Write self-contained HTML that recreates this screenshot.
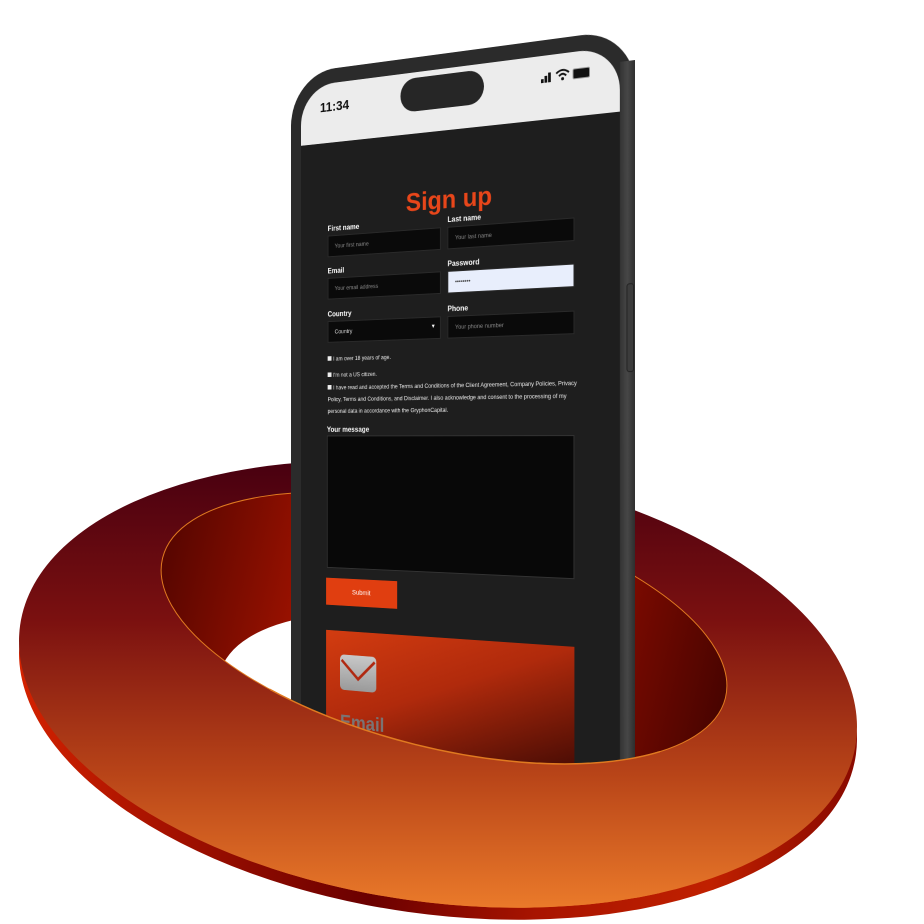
<!DOCTYPE html>
<html><head><meta charset="utf-8"><style>
html,body{margin:0;padding:0;background:#fff;width:924px;height:924px;overflow:hidden;position:relative;font-family:"Liberation Sans",sans-serif}
svg{position:absolute;left:0;top:0}
#ph{position:absolute;left:228px;top:0;width:407px;height:820px;transform-origin:407px 440px;transform:perspective(1000px) rotateY(-18deg)}
.frame{position:absolute;left:0;top:28px;width:407px;height:772px;background:#2b2b2b;border-radius:58px 58px 0 0}
.side{position:absolute;right:0;top:60px;width:16px;height:740px;background:linear-gradient(90deg,#333,#474747 50%,#2e2e2e)}
.screen{position:absolute;left:13px;top:44px;width:378px;height:756px;background:#1e1e1e;border-radius:44px 44px 0 0;overflow:hidden}
.status{position:absolute;left:0;top:0;width:378px;height:66px;background:#ececec}
.pill{position:absolute;left:127px;top:6px;width:100px;height:36px;background:#262626;border-radius:18px}
.time{position:absolute;left:25px;top:18px;font-size:15px;font-weight:bold;color:#111}
.a{position:absolute;color:#fff}
.lbl{font-size:8px;font-weight:bold}
.in{position:absolute;background:#0a0a0a;border:1px solid #2a2a2a;height:24px;box-sizing:border-box;color:#888;font-size:6.5px;padding:8px 0 0 8px}
.cb{font-size:6.3px;color:#eee;line-height:13px}
.cb b{display:inline-block;width:5px;height:5px;background:#eee;margin-right:2px}
</style></head><body>
<svg width="924" height="924" viewBox="0 0 924 924">
<defs>
<linearGradient id="face" gradientUnits="userSpaceOnUse" x1="0" y1="462" x2="0" y2="908">
<stop offset="0" stop-color="#480010"/><stop offset=".35" stop-color="#7a1010"/><stop offset=".7" stop-color="#b84418"/><stop offset="1" stop-color="#ea7a2a"/></linearGradient>
<linearGradient id="side" gradientUnits="userSpaceOnUse" x1="20" y1="0" x2="860" y2="0">
<stop offset="0" stop-color="#d42200"/><stop offset=".22" stop-color="#a01000"/><stop offset=".45" stop-color="#6a0000"/><stop offset=".65" stop-color="#a81400"/><stop offset=".85" stop-color="#c02000"/><stop offset="1" stop-color="#8a0a00"/></linearGradient>
<linearGradient id="wall" gradientUnits="userSpaceOnUse" x1="160" y1="0" x2="730" y2="0">
<stop offset="0" stop-color="#5a0600"/><stop offset=".25" stop-color="#9c1200"/><stop offset=".55" stop-color="#8a0c00"/><stop offset=".8" stop-color="#7a0a00"/><stop offset="1" stop-color="#4a0400"/></linearGradient>
<mask id="m"><rect width="924" height="924" fill="#000"/><ellipse cx="438" cy="684" rx="422" ry="218" transform="rotate(8 438 684)" fill="#fff"/><ellipse cx="444" cy="628" rx="290" ry="120" transform="rotate(14 444 628)" fill="#000"/></mask>
<clipPath id="hc"><ellipse cx="444" cy="628" rx="290" ry="120" transform="rotate(14 444 628)"/></clipPath>
<clipPath id="lc"><rect x="0" y="0" width="300" height="924"/></clipPath>
</defs>
<ellipse cx="438" cy="696" rx="422" ry="218" transform="rotate(8 438 696)" fill="url(#side)"/>
<rect width="924" height="924" fill="url(#face)" mask="url(#m)"/>
<ellipse cx="444" cy="628" rx="290" ry="120" transform="rotate(14 444 628)" fill="url(#wall)"/>
<g clip-path="url(#lc)"><g clip-path="url(#hc)"><ellipse cx="470" cy="736" rx="258" ry="110" transform="rotate(14 470 736)" fill="#fff"/></g></g>
<ellipse cx="444" cy="628" rx="290" ry="120" transform="rotate(14 444 628)" fill="none" stroke="#e07a20" stroke-width="1"/>
</svg>

<div id="ph">
<div class="frame"></div>
<div class="side"></div>
<div style="position:absolute;left:398px;top:283px;width:6px;height:87px;background:#3c3c3c;border-radius:3px;border:1px solid #222"></div>
<div class="screen">
 <div class="status">
  <div class="time">11:34</div>
  <div class="pill"></div>
  <div style="position:absolute;left:292px;top:24px;width:3px;height:4px;background:#111"></div>
  <div style="position:absolute;left:296px;top:21px;width:3px;height:7px;background:#111"></div>
  <div style="position:absolute;left:300px;top:18px;width:3px;height:10px;background:#111"></div>
  <svg width="16" height="14" style="position:absolute;left:308px;top:15px"><path d="M1 5 Q8 -1 15 5" fill="none" stroke="#111" stroke-width="2"/><path d="M4 8 Q8 4 12 8" fill="none" stroke="#111" stroke-width="2"/><circle cx="8" cy="11" r="1.6" fill="#111"/></svg>
  <div style="position:absolute;left:327px;top:17px;width:17px;height:9px;background:#111;border-radius:2px;border:1px solid #999"></div>
 </div>
 <div class="a" style="left:0;width:370px;text-align:center;top:124px;font-size:28px;font-weight:bold;color:#e8461a">Sign up</div>

 <div class="a lbl" style="left:35px;top:157px">First name</div>
 <div class="in" style="left:35px;top:169px;width:141px">Your first name</div>
 <div class="a lbl" style="left:184px;top:157px">Last name</div>
 <div class="in" style="left:184px;top:169px;width:145px">Your last name</div>

 <div class="a lbl" style="left:35px;top:204px">Email</div>
 <div class="in" style="left:35px;top:216px;width:141px">Your email address</div>
 <div class="a lbl" style="left:184px;top:204px">Password</div>
 <div class="in" style="left:184px;top:216px;width:145px;background:#e8eefc;color:#333">••••••••</div>

 <div class="a lbl" style="left:35px;top:252px">Country</div>
 <div class="in" style="left:35px;top:264px;width:141px;color:#ddd">Country<span style="position:absolute;right:5px;top:7px;font-size:6px;color:#fff">▼</span></div>
 <div class="a lbl" style="left:184px;top:252px">Phone</div>
 <div class="in" style="left:184px;top:264px;width:145px">Your phone number</div>

 <div class="a cb" style="left:35px;top:300px"><b></b>I am over 18 years of age.</div>
 <div class="a cb" style="left:35px;top:318px"><b></b>I'm not a US citizen.</div>
 <div class="a cb" style="left:35px;top:332px;width:300px"><b></b>I have read and accepted the Terms and Conditions of the Client Agreement, Company Policies, Privacy Policy, Terms and Conditions, and Disclaimer. I also acknowledge and consent to the processing of my personal data in accordance with the GryphonCapital.</div>

 <div class="a lbl" style="left:34px;top:380px">Your message</div>
 <div style="position:absolute;left:34px;top:391px;width:295px;height:147px;background:#080808;border:1px solid #333;box-sizing:border-box"></div>
 <div style="position:absolute;left:33px;top:549px;width:90px;height:30px;background:#e03e10;color:#fff;font-size:7.5px;text-align:center;line-height:30px">Submit</div>

 <div style="position:absolute;left:33px;top:607px;width:296px;height:200px;background:linear-gradient(160deg,#d33c10 0%,#b02a0c 35%,#4a0c04 75%,#1a0602 100%)"></div>
 <div style="position:absolute;left:51px;top:633px;width:46px;height:39px;background:linear-gradient(#c8c8c8,#9a9a9a);border-radius:5px;overflow:hidden">
  <svg width="46" height="39" style="position:absolute;left:0;top:0"><path d="M2 6 L23 26 L44 6" fill="none" stroke="#b02810" stroke-width="3"/></svg>
 </div>
 <div style="position:absolute;left:51px;top:696px;font-size:21px;font-weight:bold;color:#7a7474">Email</div>
</div>
</div>

<svg width="924" height="924" viewBox="0 0 924 924">
<defs>
<clipPath id="fc"><rect x="270" y="650" width="390" height="274"/></clipPath>
<mask id="m2"><rect width="924" height="924" fill="#000"/><ellipse cx="438" cy="684" rx="422" ry="218" transform="rotate(8 438 684)" fill="#fff"/><ellipse cx="444" cy="628" rx="290" ry="120" transform="rotate(14 444 628)" fill="#000"/></mask>
</defs>
<g clip-path="url(#fc)">
<rect width="924" height="924" fill="url(#face)" mask="url(#m2)"/>
<ellipse cx="444" cy="628" rx="290" ry="120" transform="rotate(14 444 628)" fill="none" stroke="#e07a20" stroke-width="1.5"/>
</g>
</svg>
</body></html>
